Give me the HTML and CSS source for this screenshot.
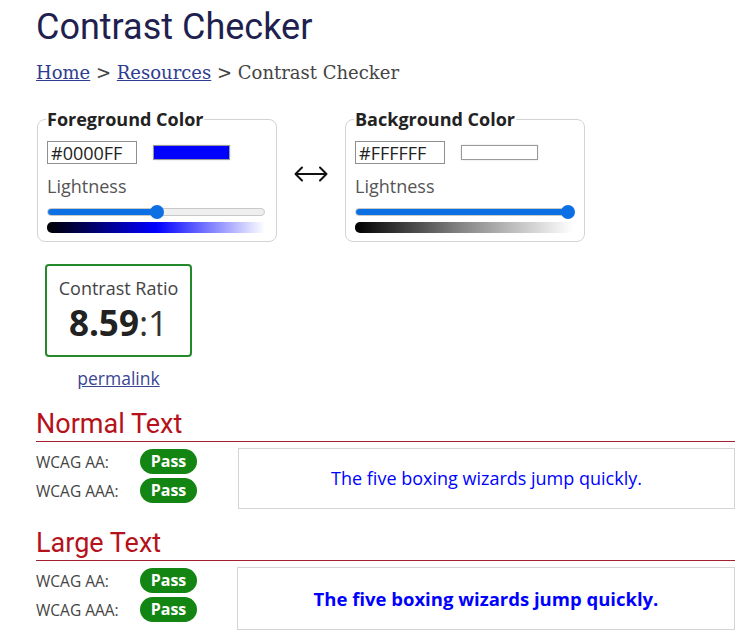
FILE: index.html
```html
<!DOCTYPE html>
<html lang="en">
<head>
<meta charset="utf-8">
<title>Contrast Checker</title>
<link rel="stylesheet" href="styles.css">
</head>
<body>
<h1 class="title">Contrast Checker</h1>
<nav class="crumbs"><a href="#">Home</a> &gt; <a href="#">Resources</a> &gt; Contrast Checker</nav>

<div class="pickers">
  <fieldset class="picker">
    <legend class="picker-legend">Foreground Color</legend>
    <div class="hex-row">
      <input class="hex" type="text" value="#0000FF">
      <span class="swatch swatch-fg"></span>
    </div>
    <div class="light-label">Lightness</div>
    <div class="slider">
      <div class="track" style="--pos: 50.5%"></div>
      <span class="thumb" style="left: calc(50.5% - 7px)"></span>
    </div>
    <div class="grad grad-fg"></div>
  </fieldset>

  <div class="swap">
    <svg width="36" height="16" viewBox="0 0 36 16" aria-hidden="true">
      <path d="M2.5 8H33.5M9 1.5L2.5 8L9 14.5M27 1.5L33.5 8L27 14.5" fill="none" stroke="#111" stroke-width="2" stroke-linecap="round" stroke-linejoin="round"/>
    </svg>
  </div>

  <fieldset class="picker">
    <legend class="picker-legend">Background Color</legend>
    <div class="hex-row">
      <input class="hex" type="text" value="#FFFFFF">
      <span class="swatch swatch-bg"></span>
    </div>
    <div class="light-label">Lightness</div>
    <div class="slider">
      <div class="track" style="--pos: 100%"></div>
      <span class="thumb" style="left: calc(100% - 12px)"></span>
    </div>
    <div class="grad grad-bg"></div>
  </fieldset>
</div>

<div class="ratio-wrap">
  <div class="ratio-box">
    <div class="ratio-label">Contrast Ratio</div>
    <div class="ratio-value"><strong>8.59</strong>:1</div>
  </div>
  <a class="permalink" href="#">permalink</a>
</div>

<h2 class="section-head">Normal Text</h2>
<div class="results">
  <div class="levels">
    <div class="level"><span class="level-name">WCAG AA:</span><span class="badge">Pass</span></div>
    <div class="level"><span class="level-name">WCAG AAA:</span><span class="badge">Pass</span></div>
  </div>
  <div class="sample sample-normal">The five boxing wizards jump quickly.</div>
</div>

<h2 class="section-head">Large Text</h2>
<div class="results">
  <div class="levels">
    <div class="level"><span class="level-name">WCAG AA:</span><span class="badge">Pass</span></div>
    <div class="level"><span class="level-name">WCAG AAA:</span><span class="badge">Pass</span></div>
  </div>
  <div class="sample sample-large">The five boxing wizards jump quickly.</div>
</div>
</body>
</html>
```

FILE: styles.css
```css
* { box-sizing: border-box; }

body {
  margin: 0;
  padding: 0 10px 0 36px;
  background: #fff;
  font-family: "Open Sans", "Liberation Sans", sans-serif;
  color: #333;
}

.title {
  margin: 6px 0 0;
  font-family: Roboto, "Liberation Sans", sans-serif;
  font-weight: 400;
  font-size: 36px;
  line-height: 43px;
  color: #1f1f50;
}

.crumbs {
  margin-top: 13px;
  font-family: "DejaVu Serif", "Liberation Serif", serif;
  font-size: 18px;
  line-height: 22px;
  color: #444;
}

.crumbs a { color: #2e3d8f; }

.pickers {
  display: flex;
  align-items: center;
  margin-top: 25px;
}

.picker {
  width: 240px;
  margin: 0 0 0 1px;
  padding: 12px 11px 8px 9px;
  border: 1px solid #d3d3d3;
  border-radius: 8px;
  min-width: 0;
}

.picker + .swap + .picker { margin-left: 0; }

.picker-legend {
  padding: 0 1px;
  margin-left: -1px;
  font-weight: 700;
  font-size: 18px;
  line-height: 20px;
  color: #222;
}

.hex-row {
  display: flex;
  align-items: center;
}

.hex {
  width: 90px;
  height: 23px;
  margin: 0;
  padding: 0 3px;
  border: 1px solid #8f8f8f;
  border-radius: 0;
  font-family: "Open Sans", "Liberation Sans", sans-serif;
  font-size: 18px;
  color: #222;
  background: #fff;
}

.swatch {
  width: 77px;
  height: 15px;
  margin-left: 16px;
  border: 1px solid #9a9a9a;
  box-shadow: 0 0 2px rgba(0,0,0,0.15);
}

.swatch-fg { background: #0000ff; }
.swatch-bg { background: #ffffff; }

.light-label {
  margin-top: 10px;
  font-size: 18px;
  line-height: 24px;
  color: #555;
}

.slider {
  position: relative;
  height: 14px;
  margin-top: 7px;
  display: flex;
  align-items: center;
}

.track {
  width: 100%;
  height: 8px;
  border-radius: 4px;
  border: 1px solid #c9c9c9;
  background: linear-gradient(to right, #0d6fe4 0, #0d6fe4 var(--pos), #efefef var(--pos), #efefef 100%);
}

.thumb {
  position: absolute;
  top: 0;
  width: 14px;
  height: 14px;
  border-radius: 50%;
  background: #0d6fe4;
}

.grad {
  height: 11px;
  margin-top: 3px;
  border-radius: 5px 0 0 5px;
}

.grad-fg { background: linear-gradient(to right, #000 0, #0000ff 50%, #fff 100%); }
.grad-bg { background: linear-gradient(to right, #000 0, #888 50%, #fff 100%); }

.swap {
  width: 68px;
  display: flex;
  justify-content: center;
  padding-bottom: 3px;
}

.swap svg { display: block; }

.ratio-wrap {
  display: flex;
  flex-direction: column;
  align-items: center;
  width: 147px;
  margin: 22px 0 0 9px;
}

.ratio-box {
  width: 147px;
  height: 93px;
  padding-top: 10px;
  border: 2px solid #23892a;
  border-radius: 4px;
  text-align: center;
}

.ratio-label {
  font-size: 18px;
  line-height: 24px;
  color: #444;
}

.ratio-value {
  margin-top: 3px;
  font-size: 35px;
  line-height: 40px;
  color: #333;
}

.ratio-value strong { font-weight: 700; color: #222; }

.permalink {
  margin-top: 9px;
  font-size: 17.5px;
  line-height: 24px;
  color: #3a4694;
}

.section-head {
  margin: 19px 0 0;
  padding-bottom: 2px;
  border-bottom: 1px solid #a3202e;
  font-family: Roboto, "Liberation Sans", sans-serif;
  font-weight: 400;
  font-size: 27px;
  line-height: 30px;
  color: #b5121b;
}

.results {
  display: grid;
  grid-template-columns: 201px 1fr;
  align-items: start;
  margin-top: 6px;
}

.levels {
  display: flex;
  flex-direction: column;
  gap: 4px;
  padding-top: 1px;
}

.level {
  display: flex;
  align-items: center;
  height: 25px;
}

.level-name {
  width: 104px;
  font-size: 15.5px;
  color: #444;
}

.badge {
  width: 57px;
  height: 25px;
  border-radius: 13px;
  background: #128512;
  color: #fff;
  font-weight: 700;
  font-size: 16px;
  line-height: 25px;
  text-align: center;
}

.sample {
  padding: 18px 8px;
  border: 1px solid #d4d4d4;
  text-align: center;
  color: #0000ff;
}

.sample-normal {
  font-size: 18px;
  line-height: 23px;
  margin-left: 1px;
}

.sample-large {
  font-size: 18.5px;
  line-height: 25px;
  font-weight: 700;
}
```
